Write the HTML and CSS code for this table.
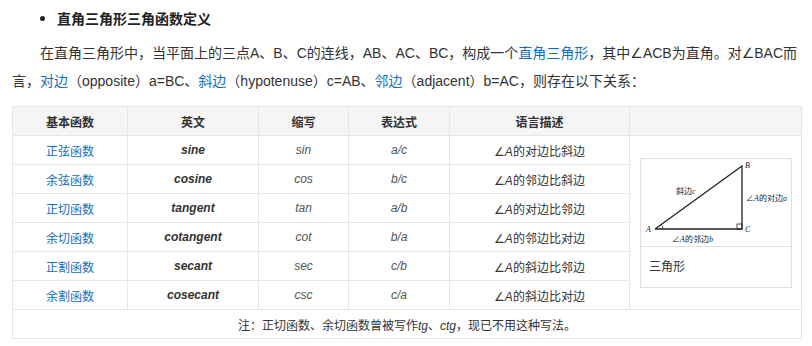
FILE: index.html
```html
<!DOCTYPE html>
<html lang="zh-CN">
<head>
    <meta charset="UTF-8">
    <meta name="viewport" content="width=device-width, initial-scale=1.0">
    <title>直角三角形三角函数定义</title>
    <link rel="stylesheet" href="styles.css">
</head>
<body>
<div id="page">
    <h3 class="title"><span class="dot"></span>直角三角形三角函数定义</h3>
    <p class="para">在直角三角形中，当平面上的三点A、B、C的连线，AB、AC、BC，构成一个<a>直角三角形</a>，其中<span class="ang">∠</span>ACB为直角。对<span class="ang">∠</span>BAC而言，<a>对边</a>（opposite）a=BC、<a>斜边</a>（hypotenuse）c=AB、<a>邻边</a>（adjacent）b=AC，则存在以下关系：</p>
    <table class="tbl">
        <tr class="head">
            <th class="c1">基本函数</th>
            <th class="c2">英文</th>
            <th class="c3">缩写</th>
            <th class="c4">表达式</th>
            <th class="c5">语言描述</th>
            <th class="c6"></th>
        </tr>
        <tr>
            <td><a>正弦函数</a></td>
            <td class="en">sine</td>
            <td class="it">sin</td>
            <td class="it">a/c</td>
            <td><span class="ang">∠</span><i>A</i>的对边比斜边</td>
            <td class="pic" rowspan="6">
                <div class="figure">
                    <svg class="tri" width="151" height="87" viewBox="0 0 151 87">
                        <polyline points="14,70 101,7 101,70 14,70" fill="none" stroke="#222" stroke-width="1.3"/>
                        <path d="M22 70 A8 8 0 0 0 20.5 65.5" fill="none" stroke="#222" stroke-width="0.8"/>
                        <rect x="96" y="65" width="5" height="5" fill="none" stroke="#222" stroke-width="0.8"/>
                        <text x="104" y="9" class="lb">B</text>
                        <text x="104" y="73" class="lb">C</text>
                        <text x="5" y="73" class="lb">A</text>
                        <text x="35" y="35" class="sm">斜边<tspan font-style="italic">c</tspan></text>
                        <text x="105" y="42" class="sm">∠<tspan font-style="italic">A</tspan>的对边<tspan font-style="italic">a</tspan></text>
                        <text x="31" y="83" class="sm">∠<tspan font-style="italic">A</tspan>的邻边<tspan font-style="italic">b</tspan></text>
                    </svg>
                    <div class="cap">三角形</div>
                </div>
            </td>
        </tr>
        <tr>
            <td><a>余弦函数</a></td>
            <td class="en">cosine</td>
            <td class="it">cos</td>
            <td class="it">b/c</td>
            <td><span class="ang">∠</span><i>A</i>的邻边比斜边</td>
        </tr>
        <tr>
            <td><a>正切函数</a></td>
            <td class="en">tangent</td>
            <td class="it">tan</td>
            <td class="it">a/b</td>
            <td><span class="ang">∠</span><i>A</i>的对边比邻边</td>
        </tr>
        <tr>
            <td><a>余切函数</a></td>
            <td class="en">cotangent</td>
            <td class="it">cot</td>
            <td class="it">b/a</td>
            <td><span class="ang">∠</span><i>A</i>的邻边比对边</td>
        </tr>
        <tr>
            <td><a>正割函数</a></td>
            <td class="en">secant</td>
            <td class="it">sec</td>
            <td class="it">c/b</td>
            <td><span class="ang">∠</span><i>A</i>的斜边比邻边</td>
        </tr>
        <tr>
            <td><a>余割函数</a></td>
            <td class="en">cosecant</td>
            <td class="it">csc</td>
            <td class="it">c/a</td>
            <td><span class="ang">∠</span><i>A</i>的斜边比对边</td>
        </tr>
        <tr>
            <td class="note" colspan="6">注：正切函数、余切函数曾被写作<i>tg</i>、<i>ctg</i>，现已不用这种写法。</td>
        </tr>
    </table>
</div>
</body>
</html>
```

FILE: styles.css
```css
body {
    margin: 0;
    background: #fff;
    color: #333;
    font-family: "Liberation Sans", "Noto Sans CJK SC", sans-serif;
}
#page {
    padding: 0 10px 0 12px;
}
a {
    color: #136ec2;
}
.ang {
    font-family: "DejaVu Sans", sans-serif;
}
.title {
    margin: 0;
    padding: 7px 0 0 28px;
    height: 22px;
    display: flex;
    align-items: center;
    font-size: 14px;
    font-weight: bold;
    color: #222;
}
.dot {
    width: 5px;
    height: 5px;
    border-radius: 50%;
    background: #222;
    margin-right: 12px;
}
.para {
    margin: 10px 0 0;
    font-size: 14px;
    line-height: 28px;
    text-indent: 28px;
}
.tbl {
    margin-top: 11px;
    width: 790px;
    border-collapse: collapse;
    font-size: 12px;
    table-layout: fixed;
}
.tbl th,
.tbl td {
    box-sizing: border-box;
    border: 1px solid #e6e6e6;
    height: 29px;
    padding: 0 6px;
    text-align: center;
    vertical-align: middle;
}
.tbl th {
    background: #f5f5f5;
    font-weight: bold;
    color: #333;
}
.c1 { width: 115px; }
.c2 { width: 131px; }
.c3 { width: 90px; }
.c4 { width: 101px; }
.c5 { width: 180px; }
.en {
    font-weight: bold;
    font-style: italic;
}
.it {
    font-style: italic;
    color: #555;
}
.tbl .pic {
    padding: 0 9px 0 10px;
}
.figure {
    border: 1px solid #e0e0e0;
    background: #fff;
}
.tri {
    display: block;
    border-bottom: 1px solid #e0e0e0;
    font-family: "Liberation Serif", "Noto Sans CJK SC", serif;
}
.lb {
    font-size: 8px;
    font-style: italic;
    fill: #222;
}
.sm {
    font-size: 8px;
    fill: #222;
}
.cap {
    text-align: left;
    padding: 0 8px;
    height: 40px;
    line-height: 40px;
    font-size: 12px;
}
.note {
    color: #333;
}
```
